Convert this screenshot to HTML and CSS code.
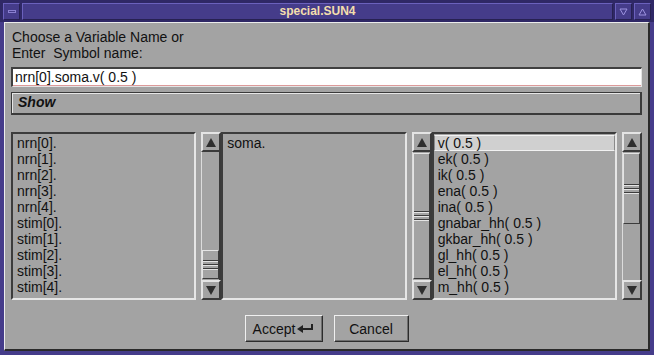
FILE: index.html
```html
<!DOCTYPE html>
<html lang="en">
<head>
    <meta charset="UTF-8">
    <title>special.SUN4</title>
    <link rel="stylesheet" href="styles.css">
</head>
<body>
    <div class="titlebar">
        <div class="tb-btn"><span class="menu-mark"></span></div>
        <div class="tb-title">special.SUN4</div>
        <div class="tb-btn">
            <svg width="9" height="8" viewBox="0 0 9 8"><polygon points="1,1 8,1 4.5,7" fill="none" stroke="#9d93e0" stroke-width="1"/></svg>
        </div>
        <div class="tb-btn">
            <svg width="9" height="8" viewBox="0 0 9 8"><polygon points="4.5,1 8,7 1,7" fill="none" stroke="#9d93e0" stroke-width="1"/></svg>
        </div>
    </div>

    <div class="panel">
        <div class="prompt">Choose a Variable Name or<br>Enter&nbsp; Symbol name:</div>
        <div class="entry">nrn[0].soma.v( 0.5 )</div>
        <div class="show">Show</div>

        <div class="browsers">
            <div class="list">
                <div class="item">nrn[0].</div>
                <div class="item">nrn[1].</div>
                <div class="item">nrn[2].</div>
                <div class="item">nrn[3].</div>
                <div class="item">nrn[4].</div>
                <div class="item">stim[0].</div>
                <div class="item">stim[1].</div>
                <div class="item">stim[2].</div>
                <div class="item">stim[3].</div>
                <div class="item">stim[4].</div>
            </div>
            <div class="sb">
                <div class="arrow"><svg width="10" height="9" viewBox="0 0 10 9"><polygon points="5,0 10,9 0,9" fill="#2e2e2e"/></svg></div>
                <div class="trough">
                    <div class="thumb thumb-end"><span class="grip"></span><span class="grip"></span><span class="grip"></span></div>
                </div>
                <div class="arrow"><svg width="10" height="9" viewBox="0 0 10 9"><polygon points="0,0 10,0 5,9" fill="#2e2e2e"/></svg></div>
            </div>

            <div class="list">
                <div class="item">soma.</div>
            </div>
            <div class="sb">
                <div class="arrow"><svg width="10" height="9" viewBox="0 0 10 9"><polygon points="5,0 10,9 0,9" fill="#2e2e2e"/></svg></div>
                <div class="trough">
                    <div class="thumb thumb-full"><span class="grip"></span><span class="grip"></span><span class="grip"></span></div>
                </div>
                <div class="arrow"><svg width="10" height="9" viewBox="0 0 10 9"><polygon points="0,0 10,0 5,9" fill="#2e2e2e"/></svg></div>
            </div>

            <div class="list">
                <div class="item sel">v( 0.5 )</div>
                <div class="item">ek( 0.5 )</div>
                <div class="item">ik( 0.5 )</div>
                <div class="item">ena( 0.5 )</div>
                <div class="item">ina( 0.5 )</div>
                <div class="item">gnabar_hh( 0.5 )</div>
                <div class="item">gkbar_hh( 0.5 )</div>
                <div class="item">gl_hh( 0.5 )</div>
                <div class="item">el_hh( 0.5 )</div>
                <div class="item">m_hh( 0.5 )</div>
            </div>
            <div class="sb">
                <div class="arrow"><svg width="10" height="9" viewBox="0 0 10 9"><polygon points="5,0 10,9 0,9" fill="#2e2e2e"/></svg></div>
                <div class="trough">
                    <div class="thumb thumb-top"><span class="grip"></span><span class="grip"></span><span class="grip"></span></div>
                </div>
                <div class="arrow"><svg width="10" height="9" viewBox="0 0 10 9"><polygon points="0,0 10,0 5,9" fill="#2e2e2e"/></svg></div>
            </div>
        </div>

        <div class="actions">
            <button class="btn btn-accept">Accept<svg class="return" width="17" height="9" viewBox="0 0 17 9"><polygon points="0,5 6,1 6,9" fill="#222"/><rect x="5" y="4" width="11" height="2" fill="#222"/><rect x="14" y="0" width="2" height="6" fill="#222"/></svg></button>
            <button class="btn btn-cancel">Cancel</button>
        </div>
    </div>
</body>
</html>
```

FILE: styles.css
```css
body {
    margin: 0;
    width: 654px;
    height: 355px;
    overflow: hidden;
    background-color: #453c8a;
    font-family: "Liberation Sans", Arial, sans-serif;
    font-size: 14px;
    color: #111;
}

/* window title bar */
.titlebar {
    display: flex;
    gap: 2px;
    height: 22px;
    box-sizing: border-box;
    padding: 3px 3px 2px 3px;
    background-color: #2f2866;
}

.tb-btn {
    width: 17px;
    box-sizing: border-box;
    display: flex;
    align-items: center;
    justify-content: center;
    background-color: #453c8a;
    border: 1px solid;
    border-color: #6b61bd #272152 #272152 #6b61bd;
}

.menu-mark {
    width: 8px;
    height: 3px;
    box-sizing: border-box;
    border: 1px solid #8a80d0;
}

.tb-title {
    flex: 1;
    background-color: #453c8a;
    border: 1px solid;
    border-color: #6b61bd #272152 #272152 #6b61bd;
    color: #f4dfad;
    font-size: 12px;
    font-weight: bold;
    line-height: 15px;
    text-align: center;
}

/* dialog body */
.panel {
    margin: 0 4px 4px 4px;
    padding: 6px 6px 7px 6px;
    background-color: #a3a3a3;
    border-style: solid;
    border-width: 1px 2px 2px 1px;
    border-color: #ececec #2a2a2a #2a2a2a #ececec;
}

.prompt {
    padding-left: 1px;
    line-height: 16px;
}

.entry {
    margin-top: 6px;
    height: 20px;
    box-sizing: border-box;
    padding: 0 2px;
    line-height: 16px;
    background-color: #fff;
    border-style: solid;
    border-width: 2px 1px 1px 2px;
    border-color: #404040 #e4e4e4 #e4e4e4 #404040;
    box-shadow: inset 0 -1px #dc9a9a;
}

.show {
    margin-top: 5px;
    height: 23px;
    box-sizing: border-box;
    padding: 1px 6px 0 6px;
    line-height: 16px;
    font-weight: bold;
    font-style: italic;
    border: 1px solid #3a3a3a;
    border-right-width: 2px;
    border-bottom-width: 2px;
    box-shadow: inset 1px 1px #e6e6e6;
}

/* browsers */
.browsers {
    display: flex;
    height: 168px;
    margin-top: 17px;
}

.list {
    flex: 1;
    min-width: 0;
    padding: 1px 0;
    margin-right: 5px;
    overflow: hidden;
    border: 2px solid;
    border-color: #3c3c3c #e6e6e6 #e6e6e6 #3c3c3c;
}

.item {
    padding: 0 3px;
    line-height: 14px;
    white-space: nowrap;
    border: 1px solid transparent;
}

.item.sel {
    background-color: #d0d0d0;
    border-color: #f2f2f2 #8a8a8a #f2f2f2 #8a8a8a;
}

.sb {
    width: 20px;
    flex: none;
    display: flex;
    flex-direction: column;
}

.arrow {
    height: 20px;
    box-sizing: border-box;
    display: flex;
    align-items: center;
    justify-content: center;
    border: 2px solid;
    border-color: #e4e4e4 #3a3a3a #3a3a3a #e4e4e4;
}

.trough {
    flex: 1;
    display: flex;
    flex-direction: column;
    padding: 1px 0;
    border-left: 1px solid #dcdcdc;
    border-right: 2px solid #3a3a3a;
}

.thumb {
    display: flex;
    flex-direction: column;
    justify-content: center;
    gap: 2px;
    border: 1px solid;
    border-color: #e4e4e4 #3c3c3c #3c3c3c #e4e4e4;
}

.thumb-end {
    margin-top: auto;
    height: 27px;
}

.thumb-full {
    flex: 1;
}

.thumb-top {
    height: 69px;
}

.grip {
    height: 1px;
    background-color: #3c3c3c;
    border-bottom: 1px solid #e4e4e4;
}

/* buttons */
.actions {
    display: flex;
    justify-content: center;
    gap: 11px;
    margin-top: 15px;
}

.btn {
    height: 27px;
    padding: 0;
    font-family: "Liberation Sans", Arial, sans-serif;
    font-size: 14px;
    color: #111;
    background-color: #a3a3a3;
    border: 1px solid;
    border-color: #f0f0f0 #2c2c2c #2c2c2c #f0f0f0;
    box-shadow: inset -1px -1px #6e6e6e;
    display: flex;
    align-items: center;
    justify-content: center;
}

.btn-accept {
    width: 78px;
}

.btn-cancel {
    width: 75px;
}

.return {
    margin-left: 2px;
}
```
